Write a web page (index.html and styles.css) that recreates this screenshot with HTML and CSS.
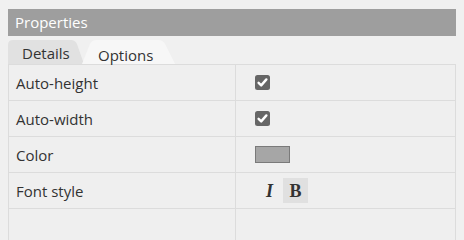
FILE: index.html
```html
<!DOCTYPE html>
<html>
<head>
<meta charset="utf-8">
<link rel="stylesheet" href="styles.css">
</head>
<body>
<div class="panel">
  <div class="header">Properties</div>
  <div class="tabs">
    <div class="tab tab-details">
      <svg class="tab-bg" width="78" height="24" viewBox="0 0 78 24"><path d="M0 24 V5 Q0 0 5 0 H63 Q67 0 69 4 L76 24 Z" fill="#e1e1e1"/></svg>
      <span class="tab-label">Details</span>
    </div>
    <div class="tab tab-options">
      <svg class="tab-bg" width="94" height="24" viewBox="0 0 94 24"><path d="M0 24 L8 4 Q10 0 14 0 H76 Q81 0 83 4 L93 24 Z" fill="#f7f7f7"/></svg>
      <span class="tab-label">Options</span>
    </div>
  </div>
  <table class="props">
    <tr><td class="name">Auto-height</td><td class="value"><span class="check"><svg width="15" height="15" viewBox="0 0 15 15"><rect x="0" y="0" width="15" height="15" rx="2.5" fill="#666"/><path d="M3.6 7.8 L6.2 10.4 L11.4 4.4" stroke="#fff" stroke-width="2.4" fill="none" stroke-linecap="round" stroke-linejoin="round"/></svg></span></td></tr>
    <tr><td class="name">Auto-width</td><td class="value"><span class="check"><svg width="15" height="15" viewBox="0 0 15 15"><rect x="0" y="0" width="15" height="15" rx="2.5" fill="#666"/><path d="M3.6 7.8 L6.2 10.4 L11.4 4.4" stroke="#fff" stroke-width="2.4" fill="none" stroke-linecap="round" stroke-linejoin="round"/></svg></span></td></tr>
    <tr><td class="name">Color</td><td class="value"><span class="swatch"></span></td></tr>
    <tr><td class="name">Font style</td><td class="value"><div class="styles"><span class="fbtn italic">I</span><span class="fbtn bold active">B</span></div></td></tr>
    <tr><td class="name"></td><td class="value"></td></tr>
  </table>
</div>
</body>
</html>
```
FILE: styles.css
```css
html, body {
  margin: 0;
  padding: 0;
  background: #f0f0f0;
  overflow: hidden;
}
body {
  padding: 9px 8px 0 8px;
  font-family: "Open Sans", "Liberation Sans", sans-serif;
  font-size: 15px;
  color: #333;
}
.panel {
  width: 448px;
}
.header {
  height: 27px;
  line-height: 26px;
  background: #9e9e9e;
  color: #fff;
  padding-left: 7px;
  box-sizing: border-box;
}
.tabs {
  display: flex;
  height: 28px;
  align-items: flex-end;
}
.tab {
  position: relative;
  height: 24px;
}
.tab-bg {
  position: absolute;
  left: 0;
  top: 0;
  display: block;
}
.tab-label {
  position: relative;
  display: block;
  line-height: 25px;
  color: #333;
  top: 1px;
}
.tab-details {
  width: 76px;
}
.tab-details .tab-label {
  padding-left: 14px;
}
.tab-options {
  width: 94px;
  margin-left: -2px;
}
.tab-options .tab-label {
  padding-left: 16px;
  top: 3px;
}
.props {
  width: 448px;
  border-collapse: collapse;
  table-layout: fixed;
}
.props td {
  border: 1px solid #dcdcdc;
  height: 35px;
  padding: 0;
  background: #efefef;
  vertical-align: middle;
}
.props td.name {
  width: 219px;
  padding-left: 7px;
  box-sizing: content-box;
}
.props td.value {
  padding-left: 19px;
}
.check {
  display: block;
  width: 15px;
  height: 15px;
}
.check svg {
  display: block;
}
.swatch {
  display: block;
  width: 33px;
  height: 15px;
  background: #a6a6a6;
  border: 1px solid #7a7a7a;
}
.styles {
  display: flex;
  gap: 1px;
  margin-left: 2px;
}
.fbtn {
  width: 25px;
  height: 25px;
  line-height: 26px;
  text-align: center;
  font-family: "Liberation Serif", "Times New Roman", serif;
  font-weight: bold;
  font-size: 18px;
  color: #333;
}
.fbtn.italic {
  font-style: italic;
}
.fbtn.active {
  background: #e0e0e0;
}
```
